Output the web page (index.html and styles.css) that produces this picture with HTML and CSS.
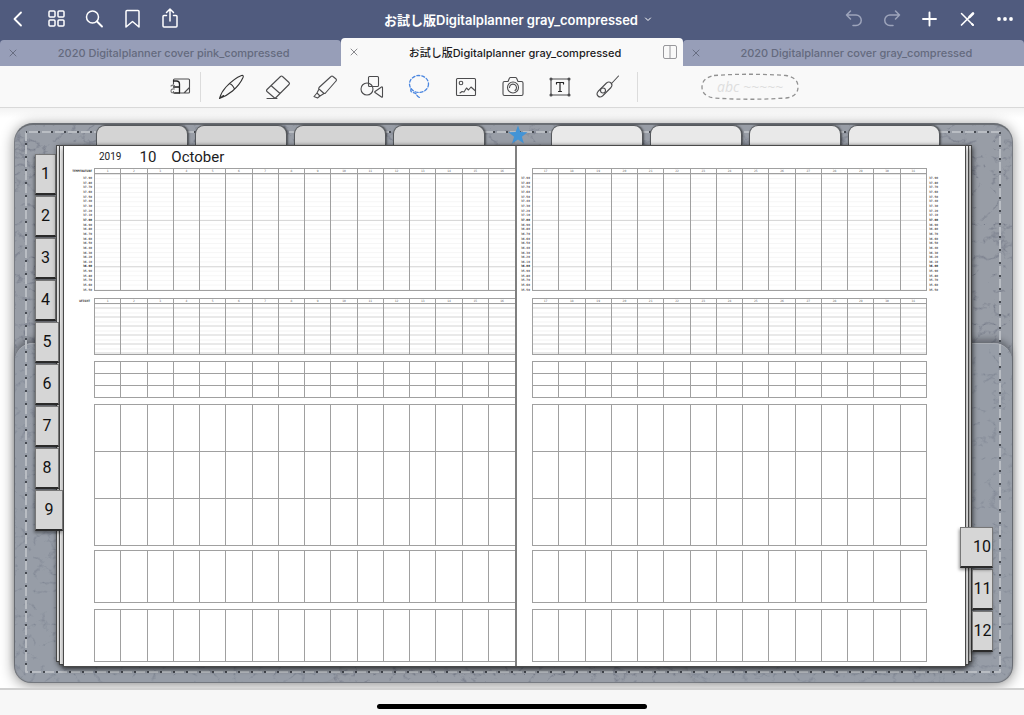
FILE: index.html
```html
<!DOCTYPE html>
<html lang="ja">
<head>
<meta charset="utf-8">
<meta name="viewport" content="width=device-width, initial-scale=1">
<title>お試し版Digitalplanner gray_compressed</title>
<link rel="stylesheet" href="styles.css">
</head>
<body>
<header class="navbar">
  <div class="nav-group">
    <button class="nav-btn" aria-label="Back"><svg width="24" height="24" viewBox="0 0 24 24"><path d="M14 5.500 7.500 12l6.500 6.500" stroke-width="1.800"/></svg></button>
    <button class="nav-btn" aria-label="Thumbnails"><svg width="24" height="24" viewBox="0 0 24 24"><rect x="4" y="4" width="6" height="6" rx="1"/><rect x="13" y="4" width="6" height="6" rx="1"/><rect x="4" y="13" width="6" height="6" rx="1"/><rect x="13" y="13" width="6" height="6" rx="1"/></svg></button>
    <button class="nav-btn" aria-label="Search"><svg width="24" height="24" viewBox="0 0 24 24"><circle cx="9.500" cy="10" r="6"/><path d="m14 14.500 5 5" stroke-width="1.900"/></svg></button>
    <button class="nav-btn" aria-label="Bookmark"><svg width="24" height="24" viewBox="0 0 24 24"><path d="M5 4.500q0-1 1-1h11q1 0 1 1V20l-6.500-5.500L5 20z"/></svg></button>
    <button class="nav-btn" aria-label="Share"><svg width="24" height="24" viewBox="0 0 24 24"><path d="M7.500 8.500H5q-1 0-1 1V19q0 1 1 1h12q1 0 1-1V9.500q0-1-1-1h-2.500M11 14V2.500M7.500 5.500 11 2l3.500 3.500"/></svg></button>
  </div>
  <button class="doc-title">お試し版Digitalplanner gray_compressed<svg width="8" height="8" viewBox="0 0 8 8"><path d="m1.500 3 2.500 2.500L6.500 3"/></svg></button>
  <div class="nav-group">
    <button class="nav-btn" aria-label="Undo" disabled><svg width="24" height="24" viewBox="0 0 24 24"><path d="M9.500 4 5.500 8l4 4M5.500 8h9.500a5 5 0 0 1 0 10.500h-3"/></svg></button>
    <button class="nav-btn" aria-label="Redo" disabled><svg width="24" height="24" viewBox="0 0 24 24"><path d="m16.500 4 4 4-4 4M20.500 8H11a5 5 0 0 0 0 10.500h3"/></svg></button>
    <button class="nav-btn" aria-label="Add"><svg width="24" height="24" viewBox="0 0 24 24"><path d="M12.500 5.500v13M6 12h13" stroke-width="1.900"/></svg></button>
    <button class="nav-btn" aria-label="Toggle editing"><svg width="24" height="24" viewBox="0 0 24 24"><path d="M6.500 6.500 18 18" /><path d="m6.500 18 8-8" stroke-width="1.700"/><path d="m14.500 10 3.500-3.500" stroke-width="2.600"/><path d="m17 17 1 1" stroke-width="2"/></svg></button>
    <button class="nav-btn" aria-label="More"><svg width="24" height="24" viewBox="0 0 24 24"><g fill="#fff" stroke="none"><circle cx="6" cy="12" r="1.900"/><circle cx="12" cy="12" r="1.900"/><circle cx="18" cy="12" r="1.900"/></g></svg></button>
  </div>
</header>

<nav class="doc-tabs" aria-label="Open documents">
  <div class="doc-tab">
    <button class="close" aria-label="Close tab"><svg width="8" height="8" viewBox="0 0 8 8"><path d="m1 1 6 6M7 1 1 7"/></svg></button>
    <a href="#pink">2020 Digitalplanner cover pink_compressed</a>
  </div>
  <div class="doc-tab current">
    <button class="close" aria-label="Close tab"><svg width="8" height="8" viewBox="0 0 8 8"><path d="m1 1 6 6M7 1 1 7"/></svg></button>
    <a href="#planner" aria-current="page">お試し版Digitalplanner gray_compressed</a>
    <button class="split" aria-label="Split view"><svg width="14" height="14" viewBox="0 0 14 14"><rect x=".5" y=".5" width="13" height="13" rx="1.500"/><path d="M7 .5v13"/></svg></button>
  </div>
  <div class="doc-tab">
    <button class="close" aria-label="Close tab"><svg width="8" height="8" viewBox="0 0 8 8"><path d="m1 1 6 6M7 1 1 7"/></svg></button>
    <a href="#gray">2020 Digitalplanner cover gray_compressed</a>
  </div>
</nav>

<div class="toolbar" role="toolbar" aria-label="Tools">
  <button class="tool zoom-tool" aria-label="Zoom window"><svg width="28" height="28" viewBox="0 0 28 28"><path d="M7.500 11V7q0-1 1-1h14q1 0 1 1v12q0 1-1 1h-9M18 20l5.500-5.500"/><path d="M7.500 8h3q3 0 3 3v9h-5q-1 0-1-1M7.500 14h6" stroke="#222" stroke-width="1.300"/><path d="M5 13q1.500-1.500 3.500-.5M8.500 16q-3.500-.5-3.500 2t3.500 1.500" stroke="#777"/></svg></button>
  <span class="divider"></span>
  <button class="tool" aria-label="Pen"><svg width="28" height="28" viewBox="0 0 28 28"><path d="M2.500 25.500q1.500-6 6.500-11.500Q17 5.500 24.500 2.500q2.500-.5 1.500 2-3 7-10.500 13.500-6 5-13 7.500zM2.500 25.500l4-3M12.500 10.500q3 1 5 5.500" stroke="#333"/></svg></button>
  <button class="tool" aria-label="Eraser"><svg width="28" height="28" viewBox="0 0 28 28"><path d="M3 16.500 16.500 3.500q1-1 2 0l6.500 6q1 1 0 2L12 24.500q-1 1-2 0l-7-6q-1-1 0-2zM7 12.500l9 8M3 25.500h10"/></svg></button>
  <button class="tool" aria-label="Highlighter"><svg width="28" height="28" viewBox="0 0 28 28"><path d="M8 14.500 20 3.500q1-1 2 0l3 2.500q1 1 0 2L14.500 20q-1 1-2 0L8 16q-.7-.7 0-1.500zM8 16l-2 4 3 3 4-2.500M6 20l-3 3.500 3.500 1.500L9 23"/></svg></button>
  <button class="tool" aria-label="Shapes"><svg width="28" height="28" viewBox="0 0 28 28"><rect x="10.500" y="3.500" width="10" height="10" rx="1"/><circle cx="9" cy="16" r="6"/><path d="M17 18.500 23.500 14q1-.5 1 .5v9q0 1.200-1 .5L17 19.500q-.7-.5 0-1z"/></svg></button>
  <button class="tool lasso" aria-label="Lasso"><svg width="28" height="28" viewBox="0 0 28 28"><ellipse cx="14" cy="11" rx="9.500" ry="8.500"/><path d="M6 16q-1 3 2 3.500t3.500 2 3 3"/></svg></button>
  <button class="tool" aria-label="Image"><svg width="28" height="28" viewBox="0 0 28 28"><rect x="4.500" y="5.500" width="19" height="17" rx="1"/><circle cx="9" cy="10" r="1.800"/><path d="m8 20 2-1.500 2 .5 2.500-4 2 2 2.500-3 4.500 4"/></svg></button>
  <button class="tool" aria-label="Camera"><svg width="28" height="28" viewBox="0 0 28 28"><path d="M5.500 8.500H9L10.500 5q.2-.5 1-.5h5q.8 0 1 .5L19 8.500h3.500q1.500 0 1.500 1.500v11q0 1.500-1.500 1.500h-17Q4 22.500 4 21V10q0-1.500 1.500-1.500z"/><circle cx="14" cy="14.500" r="5.500"/><path d="M10.500 14.500a3.500 3.500 0 1 1 5.500 3"/></svg></button>
  <button class="tool" aria-label="Text"><svg width="28" height="28" viewBox="0 0 28 28"><rect x="5" y="6" width="18" height="16"/><g fill="#555"><circle cx="5" cy="6" r="1"/><circle cx="23" cy="6" r="1"/><circle cx="5" cy="22" r="1"/><circle cx="23" cy="22" r="1"/></g><path d="M10.500 11v-1.500h7V11M14 9.500v9M12.500 18.500h3" stroke="#222" stroke-width="1.200"/></svg></button>
  <button class="tool" aria-label="Laser pointer"><svg width="28" height="28" viewBox="0 0 28 28"><path d="m19 10 6.500-7M5 18.500l8.500-8.500q2.500-2 4.500 0t0 4.500L9.500 23q-2.500 2-4.500 0t0-4.500z"/><circle cx="10" cy="17.500" r="2.500"/></svg></button>
  <span class="divider after"></span>
  <button class="lasso-sample" aria-label="Lasso options"><svg width="100" height="28" viewBox="0 0 100 28"><path d="M14 2.500q36-2.500 72 0 12 2 12 11.500T86 25q-36 2.500-72 0Q2 23 2 14T14 2.500z"/></svg><span>abc ~~~~~</span></button>
</div>

<main class="canvas" id="planner">
  <div class="cover">
    <svg class="leather" width="100%" height="100%" aria-hidden="true">
      <filter id="grain" x="0" y="0" width="100%" height="100%" color-interpolation-filters="sRGB"><feTurbulence type="turbulence" baseFrequency=".05 .06" numOctaves="4" seed="8"/><feColorMatrix values="0 0 0 0 .3  0 0 0 0 .32  0 0 0 0 .4  -4 0 0 0 .8"/></filter>
      <rect width="100%" height="100%" filter="url(#grain)"/>
    </svg>
    <span class="pocket pocket-left"></span>
    <span class="pocket pocket-right"></span>
    <span class="stitching"><svg width="100%" height="100%" aria-hidden="true"><rect class="thread" width="100%" height="100%"/><rect class="hole" width="100%" height="100%"/></svg></span>

    <nav class="top-tabs" aria-label="Sections">
      <div class="tab-set"><a href="#s1" aria-label="Section 1"></a><a href="#s2" aria-label="Section 2"></a><a href="#s3" aria-label="Section 3"></a><a href="#s4" aria-label="Section 4"></a></div>
      <a class="star" href="#top" aria-label="Index"><svg width="20" height="20" viewBox="0 0 20 20"><path d="m10 .5 2.400 6.600 7.100.2-5.600 4.400 2 6.800L10 14.500l-5.900 4 2-6.800L.5 7.300l7.100-.2z"/></svg></a>
      <div class="tab-set light"><a href="#s5" aria-label="Section 5"></a><a href="#s6" aria-label="Section 6"></a><a href="#s7" aria-label="Section 7"></a><a href="#s8" aria-label="Section 8"></a></div>
    </nav>

    <div class="book">
      <nav class="months months-left" aria-label="Months 1 to 9">
        <a href="#m1">1</a><a href="#m2">2</a><a href="#m3">3</a><a href="#m4">4</a><a class="mid" href="#m5">5</a><a class="mid" href="#m6">6</a><a class="mid" href="#m7">7</a><a class="mid" href="#m8">8</a><a class="front" href="#m9">9</a>
      </nav>
      <div class="sheets">
        <div class="sheet back"></div>
        <div class="sheet middle"></div>
        <div class="spread">
          <section class="page page-left">
            <h1><span class="year">2019</span><span>10</span><span>October</span></h1>
            <div class="labels"><span class="caption">TEMPERATURE</span><ol class="scale"></ol></div>
            <div class="tables" data-first="1" data-last="16"></div>
            <span class="caption weight">WEIGHT</span>
          </section>
          <section class="page page-right">
            <div class="labels"><ol class="scale"></ol></div>
            <div class="tables" data-first="17" data-last="31"></div>
            <div class="labels end"><ol class="scale"></ol></div>
          </section>
        </div>
      </div>
      <nav class="months months-right" aria-label="Months 10 to 12">
        <a class="front" href="#m10">10</a><a href="#m11">11</a><a href="#m12">12</a>
      </nav>
    </div>
  </div>
</main>
<footer class="home"><span class="home-bar"></span></footer>
<script src="planner.js"></script>
</body>
</html>
```
FILE: styles.css
```css
* { box-sizing: border-box; }
body {
  margin: 0;
  min-height: 100vh;
  display: flex;
  flex-direction: column;
  background: #f7f7f7;
  font-family: Inter, "Noto Sans CJK JP", sans-serif;
  color: #1c1c1e;
}
button { border: 0; padding: 0; background: none; font: inherit; color: inherit; }
a { color: inherit; text-decoration: none; }
svg { display: block; fill: none; stroke: currentColor; stroke-linecap: round; stroke-linejoin: round; }

/* Title bar */
.navbar {
  height: 38px;
  display: grid;
  grid-template-columns: 1fr auto 1fr;
  align-items: center;
  background: #505b7e;
  color: #fff;
}
.nav-group { display: flex; }
.nav-group:last-child { justify-content: flex-end; }
.nav-btn { width: 38px; height: 38px; display: grid; place-items: center; color: #fff; }
.nav-btn svg { stroke-width: 1.5; }
.nav-btn:disabled { color: #9da4bb; }
.doc-title { display: flex; align-items: center; gap: 6px; padding-left: 12px; font-size: 13px; font-weight: 600; white-space: nowrap; }

/* Document tabs */
.doc-tabs { height: 28px; display: grid; grid-template-columns: repeat(3, 1fr); background: #505b7e; }
.doc-tab {
  display: grid;
  grid-template-columns: 26px 1fr 20px;
  align-items: center;
  margin-top: 2px;
  border-radius: 4px 4px 0 0;
  background: #979eb8;
  color: #646a7e;
  font-size: 11px;
  font-weight: 500;
  text-align: center;
  white-space: nowrap;
}
.doc-tab.current { margin-top: 0; background: #f9f9f9; color: #1c1c1e; }
.close { height: 26px; display: grid; place-items: center; color: #686e82; }
.current .close { color: #8a8a8e; }
.split { color: #98989c; }

/* Tools */
.toolbar { height: 42px; display: flex; align-items: center; padding-left: 160px; background: #f9f9f9; border-bottom: 1px solid #d9d9d9; }
.tool { width: 47px; height: 40px; flex: none; display: grid; place-items: center; color: #4c4c4e; }
.tool svg { stroke-width: 1.1; }
.zoom-tool { width: 40px; }
.divider { width: 1px; height: 30px; margin-right: 6px; background: #dcdcdc; }
.divider.after { margin: 0 62px 0 7px; }
.lasso { color: #4a86e0; }
.lasso svg { stroke-width: 1.3; stroke-dasharray: 3 2; }
.lasso-sample { display: grid; place-items: center; color: #929292; }
.lasso-sample > * { grid-area: 1 / 1; }
.lasso-sample svg { stroke-width: 1.3; stroke-dasharray: 4 3; stroke-linecap: butt; }
.lasso-sample span { color: #dedede; font: italic 14px "Open Sans", sans-serif; }

/* Planner cover */
.canvas { flex: 1; padding: 15px 11px 5px 14px; background: linear-gradient(#f3f3f3, #fff 10px); border-bottom: 2px solid #d0d0d0; overflow: hidden; }
.cover {
  position: relative;
  padding-bottom: 15px;
  border: 1px solid #777b82;
  border-top: 2px solid #6b6f75;
  border-radius: 19px 19px 17px 17px;
  background: #989da6;
  box-shadow: 0 2px 14px rgba(0, 0, 0, .45);
}
.leather { position: absolute; inset: 0; border-radius: 18px; overflow: hidden; stroke: none; opacity: .5; }
.pocket { position: absolute; top: 218px; bottom: 0; width: 325px; border-top: 1px solid #a9adb4; background: rgba(150, 157, 168, .35); box-shadow: 0 -4px 6px rgba(40, 43, 48, .45); }
.pocket-left { left: 0; border-radius: 18px 0 18px 18px; }
.pocket-right { right: 0; border-radius: 0 18px 18px 18px; }
.stitching { position: absolute; inset: 7px 12px 10px 11px; }
.stitching svg { overflow: visible; stroke-linecap: butt; }
.thread { stroke: #b9bdc3; stroke-width: 2; stroke-dasharray: 9 4; stroke-dashoffset: -3; }
.hole { stroke: #464a51; stroke-width: 2; stroke-dasharray: 2 11; stroke-dashoffset: 1; }

.top-tabs { position: relative; display: flex; justify-content: space-between; padding: 0 72px 0 81px; }
.tab-set { display: flex; gap: 7px; }
.tab-set a { width: 92px; height: 20px; border: 1px solid #55585c; border-bottom: 0; border-radius: 9px 9px 0 0; background: #d4d4d4; box-shadow: 1px 0 2px rgba(0, 0, 0, .5); }
.tab-set.light a { background: #e9e9e9; }
.star svg { fill: #4394d6; stroke: none; }

/* Book */
.book { position: relative; display: grid; grid-template-columns: 41px 1fr 40px; }
.sheets { display: grid; }
.sheets > * { grid-area: 1 / 1; }
.sheet { background: #f2f2f2; border: 1px solid #4a4a4a; box-shadow: 1px 2px 5px rgba(0, 0, 0, .5); }
.sheet.back { margin-bottom: 5px; }
.sheet.middle { margin: 0 3px 2px 3px; }
.spread {
  z-index: 1;
  margin: 0 6px 0 7px;
  display: grid;
  grid-template-columns: 454fr 449fr;
  background: #fff;
  border: 1px solid #4a4a4a;
  box-shadow: 0 3px 5px rgba(0, 0, 0, .45);
}
.page { display: grid; grid-template-rows: 22px auto; padding-bottom: 4px; }
.page-left { grid-template-columns: 30px 1fr; border-right: 2px solid #808080; }
.page-right { grid-template-columns: 15px 1fr 38px; }
.page-right > * { grid-row: 2; }
.page h1 { grid-column: 1 / -1; display: flex; align-items: center; gap: 15px; margin: 0; padding-left: 35px; font: 15px Roboto, sans-serif; line-height: 24px; }
.page .year { margin-right: 3px; font-size: 10px; }

.labels { grid-row: 2; display: grid; grid-template-rows: 7px 117px; align-content: start; padding-right: 2px; font: bold 3px "DejaVu Sans Mono", monospace; text-align: right; color: #555; }
.page-left .labels { grid-column: 1; }
.labels.end { padding-left: 2px; text-align: left; }
.caption { font: bold 3px "DejaVu Sans Mono", monospace; line-height: 6px; text-align: right; color: #333; }
.caption.weight { grid-area: 2 / 1; margin: 130px 4px 0 0; height: 6px; }
.scale { grid-row: 2; display: flex; flex-direction: column; justify-content: space-between; margin: 0; padding: 1px 0 0; list-style: none; line-height: 4px; }
.scale .whole { color: #111; }
.tables { grid-row: 2; grid-column: 2; display: grid; gap: 6px; align-content: start; }

.grid { width: 100%; border-collapse: collapse; table-layout: fixed; }
.grid th, .grid td { padding: 0; border: 1px solid #a0a0a0; }
.page-left .grid tr > :last-child { border-right: 0; }
.grid th { height: 5px; font: 3px "DejaVu Sans Mono", monospace; line-height: 4px; color: #666; }
.temperature { margin-bottom: 1px; }
.temperature td {
  height: 117px;
  background:
    linear-gradient(to top, #d4d4d4 1px, transparent 1px) 0 0 / 100% 40%,
    linear-gradient(to top, #f5f5f5 1px, transparent 1px) 0 0 / 100% 4%;
}
.weight-log td {
  height: 51px;
  background:
    linear-gradient(to top, #d2d2d2 1px, transparent 1px) 0 -5px / 100% 9px,
    linear-gradient(to top, #f3f3f3 1px, transparent 1px) 0 0 / 100% 9px;
}
.checks td { height: 12px; }
.notes td { height: 47px; }
.memo td { height: 52px; }
.notes { margin-bottom: -2px; }

/* Month tabs */
.months { display: flex; flex-direction: column; align-items: flex-start; gap: 1px; font: 16px Roboto, sans-serif; line-height: 38px; text-align: center; color: #111; }
.months a { height: 41px; border: 1px solid #777; border-bottom: 2px solid #2b2b2b; background: #d6d6d6; box-shadow: -1px 2px 3px rgba(0, 0, 0, .4); }
.months-left { padding: 9px 0 0 20px; }
.months-left a { width: 21px; }
.months-left .mid { width: 24px; z-index: 1; }
.months-left .front { width: 28px; z-index: 2; }
.months-right { padding-top: 382px; }
.months-right a { width: 21px; z-index: 1; }
.months-right .front { width: 33px; margin-left: -12px; padding-left: 11px; z-index: 2; }

/* Home indicator */
.home { height: 25px; display: grid; justify-items: center; align-content: center; padding-top: 7px; background: #f7f7f7; }
.home-bar { width: 270px; height: 5px; border-radius: 3px; background: #000; }
```
FILE: planner.js
```js
// Each day table: class, number of body rows, whether it has a row of dates.
const TABLES = [
  ["temperature", 1, true],
  ["weight-log", 1, true],
  ["checks", 3, false],
  ["notes", 3, false],
  ["memo", 1, false],
  ["memo", 1, false],
];

for (const holder of document.querySelectorAll(".tables")) {
  const first = Number(holder.dataset.first);
  const days = Number(holder.dataset.last) - first + 1;
  for (const [name, rows, dated] of TABLES) {
    const table = document.createElement("table");
    table.className = "grid " + name;
    if (dated) {
      const head = table.createTHead().insertRow();
      for (let i = 0; i < days; i++) {
        const th = document.createElement("th");
        th.scope = "col";
        th.textContent = first + i;
        head.append(th);
      }
    }
    const body = table.createTBody();
    for (let r = 0; r < rows; r++) {
      const row = body.insertRow();
      for (let i = 0; i < days; i++) row.insertCell();
    }
    holder.append(table);
  }
}

for (const scale of document.querySelectorAll(".scale")) {
  for (let t = 3790; t >= 3550; t -= 10) {
    const item = document.createElement("li");
    item.textContent = (t / 100).toFixed(2);
    if (t % 100 === 0) item.className = "whole";
    scale.append(item);
  }
}
```
